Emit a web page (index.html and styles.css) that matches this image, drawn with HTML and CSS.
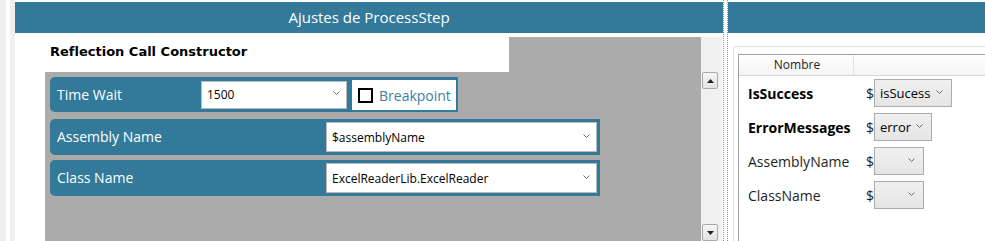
FILE: index.html
```html
<!DOCTYPE html>
<html lang="es">
<head>
    <meta charset="UTF-8">
    <title>Ajustes de ProcessStep</title>
    <link rel="stylesheet" href="styles.css">
</head>
<body>
    <div class="edge"></div>

    <div class="main">
        <div class="header">Ajustes de ProcessStep</div>
        <div class="main-body">
            <div class="panel">
                <div class="panel-title">Reflection Call Constructor</div>

                <div class="row-line">
                    <div class="field field-short">
                        <span class="field-label">Time Wait</span>
                        <div class="combo combo-time">
                            <span>1500</span>
                            <svg class="chev" width="7" height="4" viewBox="0 0 7 4"><polyline points="0.5,0.5 3.5,3.5 6.5,0.5" fill="none" stroke="#6d6d6d" stroke-width="1"/></svg>
                        </div>
                    </div>
                    <div class="breakpoint">
                        <span class="check"></span>
                        <span>Breakpoint</span>
                    </div>
                </div>

                <div class="field field-long">
                    <span class="field-label">Assembly Name</span>
                    <div class="combo combo-wide">
                        <span>$assemblyName</span>
                        <svg class="chev" width="7" height="4" viewBox="0 0 7 4"><polyline points="0.5,0.5 3.5,3.5 6.5,0.5" fill="none" stroke="#6d6d6d" stroke-width="1"/></svg>
                    </div>
                </div>

                <div class="field field-long">
                    <span class="field-label">Class Name</span>
                    <div class="combo combo-wide">
                        <span>ExcelReaderLib.ExcelReader</span>
                        <svg class="chev" width="7" height="4" viewBox="0 0 7 4"><polyline points="0.5,0.5 3.5,3.5 6.5,0.5" fill="none" stroke="#6d6d6d" stroke-width="1"/></svg>
                    </div>
                </div>
            </div>

            <div class="scrollbar">
                <div class="scroll-btn">
                    <svg width="7" height="4" viewBox="0 0 7 4"><polygon points="0,4 3.5,0 7,4" fill="#222"/></svg>
                </div>
                <div class="scroll-btn">
                    <svg width="7" height="4" viewBox="0 0 7 4"><polygon points="0,0 3.5,4 7,0" fill="#222"/></svg>
                </div>
            </div>
        </div>
    </div>

    <div class="splitter"></div>

    <div class="side">
        <div class="header"></div>
        <div class="grid-frame">
            <div class="grid">
                <div class="grid-head">
                    <div class="col-name">Nombre</div>
                </div>
                <div class="grid-row">
                    <span class="param bold">IsSuccess</span>
                    <span class="dollar">$</span>
                    <div class="pick" style="width: 78px;"><span>isSucess</span><svg class="chev" width="7" height="4" viewBox="0 0 7 4"><polyline points="0.5,0.5 3.5,3.5 6.5,0.5" fill="none" stroke="#6d6d6d" stroke-width="1"/></svg></div>
                </div>
                <div class="grid-row">
                    <span class="param bold">ErrorMessages</span>
                    <span class="dollar">$</span>
                    <div class="pick" style="width: 58px;"><span>error</span><svg class="chev" width="7" height="4" viewBox="0 0 7 4"><polyline points="0.5,0.5 3.5,3.5 6.5,0.5" fill="none" stroke="#6d6d6d" stroke-width="1"/></svg></div>
                </div>
                <div class="grid-row">
                    <span class="param">AssemblyName</span>
                    <span class="dollar">$</span>
                    <div class="pick" style="width: 50px;"><span></span><svg class="chev" width="7" height="4" viewBox="0 0 7 4"><polyline points="0.5,0.5 3.5,3.5 6.5,0.5" fill="none" stroke="#6d6d6d" stroke-width="1"/></svg></div>
                </div>
                <div class="grid-row">
                    <span class="param">ClassName</span>
                    <span class="dollar">$</span>
                    <div class="pick" style="width: 50px;"><span></span><svg class="chev" width="7" height="4" viewBox="0 0 7 4"><polyline points="0.5,0.5 3.5,3.5 6.5,0.5" fill="none" stroke="#6d6d6d" stroke-width="1"/></svg></div>
                </div>
            </div>
        </div>
    </div>
</body>
</html>
```

FILE: styles.css
```css
body {
    font-family: 'Open Sans', 'Noto Sans', sans-serif;
    background-color: #fff;
    color: #000;
    margin: 0;
    padding: 0;
    display: flex;
    width: 985px;
    height: 241px;
    overflow: hidden;
}

.edge {
    width: 4px;
    background-color: #fff;
    border-left: 6px solid #efefef;
    border-right: 5px solid #efefef;
}

.main {
    width: 708px;
    display: flex;
    flex-direction: column;
}

.header {
    margin-top: 2px;
    height: 31px;
    background-color: #337999;
    color: #fff;
    font-size: 15px;
    line-height: 30px;
    text-align: center;
}

.main-body {
    flex: 1;
    display: flex;
    padding-top: 4px;
    padding-left: 30px;
}

.panel {
    width: 656px;
    background-color: #ababab;
    display: flex;
    flex-direction: column;
}

.panel-title {
    width: 459px;
    height: 35px;
    padding-left: 5px;
    background-color: #fff;
    font-family: 'DejaVu Sans', sans-serif;
    font-weight: bold;
    font-size: 13px;
    line-height: 29px;
}

.row-line {
    display: flex;
    margin-top: 5px;
    margin-left: 5px;
}

.field {
    display: flex;
    align-items: center;
    justify-content: space-between;
    height: 35px;
    background-color: #337999;
    border-radius: 5px 0 0 5px;
    padding-left: 7px;
    padding-right: 3px;
    box-sizing: border-box;
    color: #fff;
}

    .field-label {
        font-size: 14px;
        margin-top: -1px;
    }

.field-short {
    width: 300px;
}

.field-long {
    width: 550px;
    height: 36px;
    margin-left: 5px;
    margin-top: 7px;
}

    .field-long + .field-long {
        margin-top: 5px;
    }

.combo {
    display: flex;
    align-items: center;
    justify-content: space-between;
    background-color: #fff;
    border: 1px solid #b9b9b9;
    box-sizing: border-box;
    color: #000;
    font-size: 12px;
    padding-left: 5px;
    padding-right: 6px;
}

.combo-time {
    width: 146px;
    height: 28px;
}

.combo-wide {
    width: 271px;
    height: 30px;
}

.chev {
    margin-top: -3px;
}

.breakpoint {
    display: flex;
    align-items: center;
    width: 108px;
    height: 35px;
    box-sizing: border-box;
    border-style: solid;
    border-color: #337999;
    border-width: 3px 2px 2px 2px;
    background-color: #fff;
    color: #3b7ea3;
    font-size: 14px;
    padding-left: 6px;
}

    .breakpoint .check {
        width: 11px;
        height: 11px;
        border: 2px solid #000;
        margin-right: 6px;
    }

.scrollbar {
    width: 21px;
    background-color: #f0f0f0;
    display: flex;
    flex-direction: column;
    justify-content: space-between;
    padding-top: 35px;
    box-sizing: border-box;
}

.scroll-btn {
    width: 16px;
    height: 17px;
    margin-left: 1px;
    box-sizing: border-box;
    border: 1px solid #a9a9a9;
    border-radius: 2px;
    background: linear-gradient(#f6f6f6, #e2e2e2);
    display: flex;
    align-items: center;
    justify-content: center;
}

.splitter {
    width: 3px;
    border-left: 1px dotted #8a8a8a;
    border-right: 1px dotted #8a8a8a;
}

.side {
    flex: 1;
    display: flex;
    flex-direction: column;
}

.grid-frame {
    margin-top: 13px;
    margin-left: 5px;
    flex: 1;
    border: 1px solid #dde1e6;
    border-right: none;
    border-bottom: none;
    border-radius: 3px 0 0 0;
    padding: 7px 0 0 4px;
}

.grid {
    height: 100%;
    border-left: 1px solid #9aa0a6;
    border-top: 1px solid #9aa0a6;
}

.grid-head {
    display: flex;
    height: 20px;
    border-bottom: 1px solid #d5d5d5;
    background: linear-gradient(#fff, #f4f4f4);
}

    .grid-head .col-name {
        width: 112px;
        margin-left: 2px;
        border-right: 1px solid #e2e2e2;
        text-align: center;
        font-size: 12px;
        line-height: 20px;
        color: #1e1e1e;
    }

.grid-row {
    display: flex;
    align-items: center;
    height: 34px;
    padding-left: 9px;
}

    .grid-row .param {
        width: 118px;
        font-size: 14px;
        color: #1e1e1e;
    }

    .grid-row .bold {
        font-weight: bold;
        color: #000;
    }

    .grid-row .dollar {
        width: 8px;
        font-size: 14px;
        color: #1e1e1e;
    }

.pick {
    display: flex;
    align-items: center;
    justify-content: space-between;
    height: 28px;
    box-sizing: border-box;
    border: 1px solid #acacac;
    background: linear-gradient(#f0f0f0, #e5e5e5);
    font-size: 13px;
    padding-left: 5px;
    padding-right: 8px;
    color: #000;
}

    .pick span {
        margin-top: -1px;
    }
```
